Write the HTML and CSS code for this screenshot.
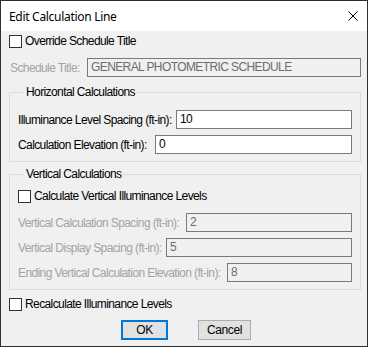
FILE: index.html
```html
<!DOCTYPE html>
<html>
<head>
<meta charset="utf-8">
<link rel="stylesheet" href="styles.css">
</head>
<body>
<div class="window">
  <div class="titlebar">
    <span class="title">Edit Calculation Line</span>
    <svg class="close" width="10" height="10" viewBox="0 0 10 10"><path d="M0.5 0.5L9.5 9.5M9.5 0.5L0.5 9.5" stroke="#000" stroke-width="1" fill="none"/></svg>
  </div>
  <div class="content">
    <label class="check row-override"><span class="box"></span><span>Override Schedule Title</span></label>
    <div class="field row-schedule disabled">
      <span class="lbl">Schedule Title:</span>
      <span class="input w-schedule">GENERAL PHOTOMETRIC SCHEDULE</span>
    </div>
    <fieldset class="group group-h">
      <legend>Horizontal Calculations</legend>
      <div class="field">
        <span class="lbl">Illuminance Level Spacing (ft-in):</span>
        <span class="input enabled w-illum">10</span>
      </div>
      <div class="field">
        <span class="lbl">Calculation Elevation (ft-in):</span>
        <span class="input enabled w-elev">0</span>
      </div>
    </fieldset>
    <fieldset class="group group-v">
      <legend>Vertical Calculations</legend>
      <label class="check row-vcheck"><span class="box"></span><span>Calculate Vertical Illuminance Levels</span></label>
      <div class="field disabled">
        <span class="lbl">Vertical Calculation Spacing (ft-in):</span>
        <span class="input w-vcs">2</span>
      </div>
      <div class="field disabled">
        <span class="lbl">Vertical Display Spacing (ft-in):</span>
        <span class="input w-vds">5</span>
      </div>
      <div class="field disabled">
        <span class="lbl">Ending Vertical Calculation Elevation (ft-in):</span>
        <span class="input w-end">8</span>
      </div>
    </fieldset>
    <label class="check row-recalc"><span class="box"></span><span>Recalculate Illuminance Levels</span></label>
    <div class="buttons">
      <button class="btn btn-ok">OK</button>
      <button class="btn btn-cancel">Cancel</button>
    </div>
  </div>
</div>
</body>
</html>
```
FILE: styles.css
```css
html, body {
  margin: 0;
  padding: 0;
  background: #f0f0f0;
}
.window {
  width: 368px;
  height: 347px;
  box-sizing: border-box;
  border: 1px solid #2e2e2e;
  background: #f0f0f0;
  font-family: "Liberation Sans", Arial, sans-serif;
  font-size: 12px;
  letter-spacing: -0.6px;
  color: #000;
  display: flex;
  flex-direction: column;
}
.titlebar {
  height: 30px;
  background: #fff;
  display: flex;
  align-items: center;
  justify-content: space-between;
  padding: 0 9px 0 8px;
  flex: none;
}
.title {
  font-family: "Noto Sans", "Liberation Sans", sans-serif;
  font-size: 12px;
  letter-spacing: -0.3px;
  margin-top: 1px;
}
.close {
  display: block;
}
.content {
  flex: 1;
  display: flex;
  flex-direction: column;
  padding: 4px 6px 0 8px;
}
.check {
  display: flex;
  align-items: center;
  gap: 3px;
  height: 13px;
  line-height: 13px;
}
.box {
  width: 13px;
  height: 13px;
  box-sizing: border-box;
  border: 1px solid #333;
  background: #fff;
  flex: none;
}
.field {
  display: flex;
  align-items: center;
  justify-content: space-between;
  height: 19px;
}
.lbl {
  white-space: nowrap;
}
.input {
  height: 19px;
  box-sizing: border-box;
  border: 1px solid #7a7a7a;
  background: #f0f0f0;
  color: #6d6d6d;
  padding: 0 3px;
  line-height: 17px;
  white-space: nowrap;
  overflow: hidden;
}
.input.enabled {
  background: #fff;
  color: #000;
}
.disabled .lbl {
  color: #a3a3a3;
}
.row-schedule {
  margin-top: 10px;
  padding-left: 1px;
}
.w-schedule { width: 274px; }
.w-illum { width: 176px; }
.w-elev { width: 197px; }
.w-vcs { width: 166px; }
.w-vds { width: 186px; }
.w-end { width: 125px; }

.group {
  margin: 0;
  border: 1px solid #dcdcdc;
  padding: 11px 8px 7px 8px;
  display: flex;
  flex-direction: column;
  gap: 6px;
  min-width: 0;
}
.group legend {
  padding: 0 2px;
  margin-left: 6px;
  line-height: 14px;
  height: 14px;
}
.group-h {
  margin-top: 8px;
}
.group-v {
  margin-top: 5px;
  padding-top: 9px;
}
.row-vcheck {
  margin-bottom: 4px;
}
.row-recalc {
  margin-top: 8px;
}
.buttons {
  margin-top: 9px;
  display: flex;
  justify-content: center;
  gap: 30px;
  padding-left: 2px;
}
.btn {
  height: 20px;
  box-sizing: border-box;
  background: #e1e1e1;
  border: 1px solid #adadad;
  font-family: "Liberation Sans", Arial, sans-serif;
  font-size: 12px;
  letter-spacing: -0.4px;
  color: #000;
  padding: 0;
  margin: 0;
  line-height: 16px;
}
.btn-ok {
  width: 47px;
  border: 2px solid #0078d7;
}
.btn-cancel {
  width: 53px;
}
```
